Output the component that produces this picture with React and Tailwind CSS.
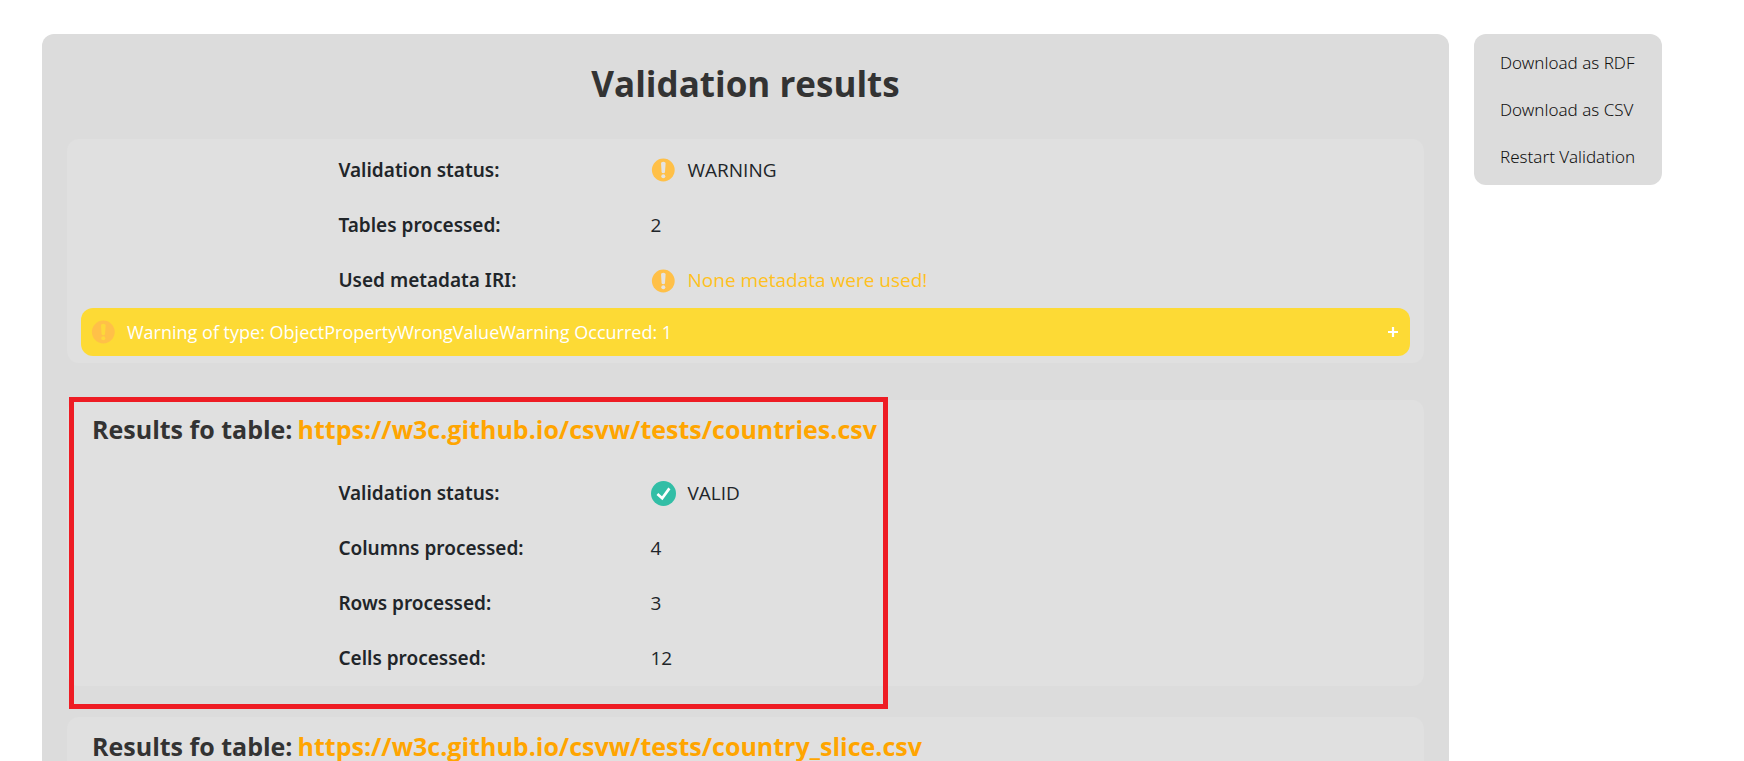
import React from "react";

function WarningIcon({ markClass = "text-[#e5e3e0]" }) {
  return (
    <svg viewBox="0 0 24 24" className={"size-6 shrink-0 " + markClass} aria-hidden="true">
      <circle cx="12.3" cy="12" r="11.4" fill="#ffc048" />
      <path d="M10 5.6C10 4.4 10.9 3.7 12.3 3.7s2.3.7 2.3 1.9l-.6 8.4c-.1.8-.8 1.2-1.7 1.2s-1.6-.4-1.7-1.2z" fill="currentColor" />
      <circle cx="12.3" cy="18.3" r="2" fill="currentColor" />
    </svg>
  );
}

function ValidIcon() {
  return (
    <svg viewBox="0 0 25 25" className="size-[25px] shrink-0" aria-hidden="true">
      <circle cx="12.5" cy="12.5" r="12.5" fill="#32bea6" />
      <path d="M6.4 13l4.8 4.2 7.2-9.8" fill="none" stroke="#fff" strokeWidth="2.7" />
    </svg>
  );
}

function Row({ label, icon, children, valueClass = "" }) {
  return (
    <div className="grid h-[55px] grid-cols-[20%_23%_1fr] items-center text-[19px] first:h-14">
      <dt className="col-start-2 font-['Noto_Sans',sans-serif] font-semibold">{label}</dt>
      <dd className={"flex items-center " + valueClass}>
        {icon && <span className="flex w-[37px]">{icon}</span>}
        {children}
      </dd>
    </div>
  );
}

function TableHeading({ url }) {
  return (
    <h2 className="flex h-[65px] items-center gap-[5px] px-[25px] pb-[5px] text-[25px] font-bold text-[#333]">
      Results fo table:
      <a href={url} className="text-[#ffa500]">{url}</a>
    </h2>
  );
}

const actions = ["Download as RDF", "Download as CSV", "Restart Validation"];

export default function App() {
  return (
    <div className="flex h-screen items-start gap-[25px] overflow-hidden bg-white pt-[34px] pr-[82px] pl-[42px] font-['Open_Sans',sans-serif] text-[#212529]">
      <main className="min-w-0 flex-1 rounded-xl bg-[#dcdcdc] px-[25px] pb-[25px]">
        <h1 className="flex h-[105px] items-center justify-center pb-1 text-[35px] font-bold text-[#333]">Validation results</h1>

        <section className="rounded-xl bg-[#e0e0e0] pt-[3px] pb-[7px]">
          <dl>
            <Row label="Validation status:" icon={<WarningIcon />}>WARNING</Row>
            <Row label="Tables processed:">2</Row>
            <Row label="Used metadata IRI:" icon={<WarningIcon />} valueClass="text-[#ffc020]">None metadata were used!</Row>
          </dl>
          <div className="px-[14px]">
            <button className="flex h-12 w-full items-center rounded-xl bg-[#fdda35] pr-3 pl-[10px] text-lg text-white">
              <WarningIcon markClass="text-[#fdd83a]" />
              <span className="ml-3 flex-1 text-left">Warning of type: ObjectPropertyWrongValueWarning Occurred: 1</span>
              <svg viewBox="0 0 10 10" className="size-[10px]" aria-hidden="true">
                <path d="M5 0v10M0 5h10" stroke="#fff" strokeWidth="2.2" />
              </svg>
            </button>
          </div>
        </section>

        <section className="relative mt-[37px] rounded-xl bg-[#e0e0e0]">
          <TableHeading url="https://w3c.github.io/csvw/tests/countries.csv" />
          <dl>
            <Row label="Validation status:" icon={<ValidIcon />}>VALID</Row>
            <Row label="Columns processed:">4</Row>
            <Row label="Rows processed:">3</Row>
            <Row label="Cells processed:">12</Row>
          </dl>
          <div className="pointer-events-none absolute -top-[3px] -bottom-[23px] left-[2px] w-[819px] border-5 border-[#ee1c24]" />
        </section>

        <section className="mt-[31px] rounded-xl bg-[#e0e0e0]">
          <TableHeading url="https://w3c.github.io/csvw/tests/country_slice.csv" />
        </section>
      </main>

      <aside className="w-[188px] shrink-0 rounded-xl bg-[#dcdcdc] px-[26px] py-[5px]">
        {actions.map((action) => (
          <button key={action} className="flex h-[47px] w-full items-center font-['Noto_Sans',sans-serif] text-[17px] font-light whitespace-nowrap text-[#111]">{action}</button>
        ))}
      </aside>
    </div>
  );
}
